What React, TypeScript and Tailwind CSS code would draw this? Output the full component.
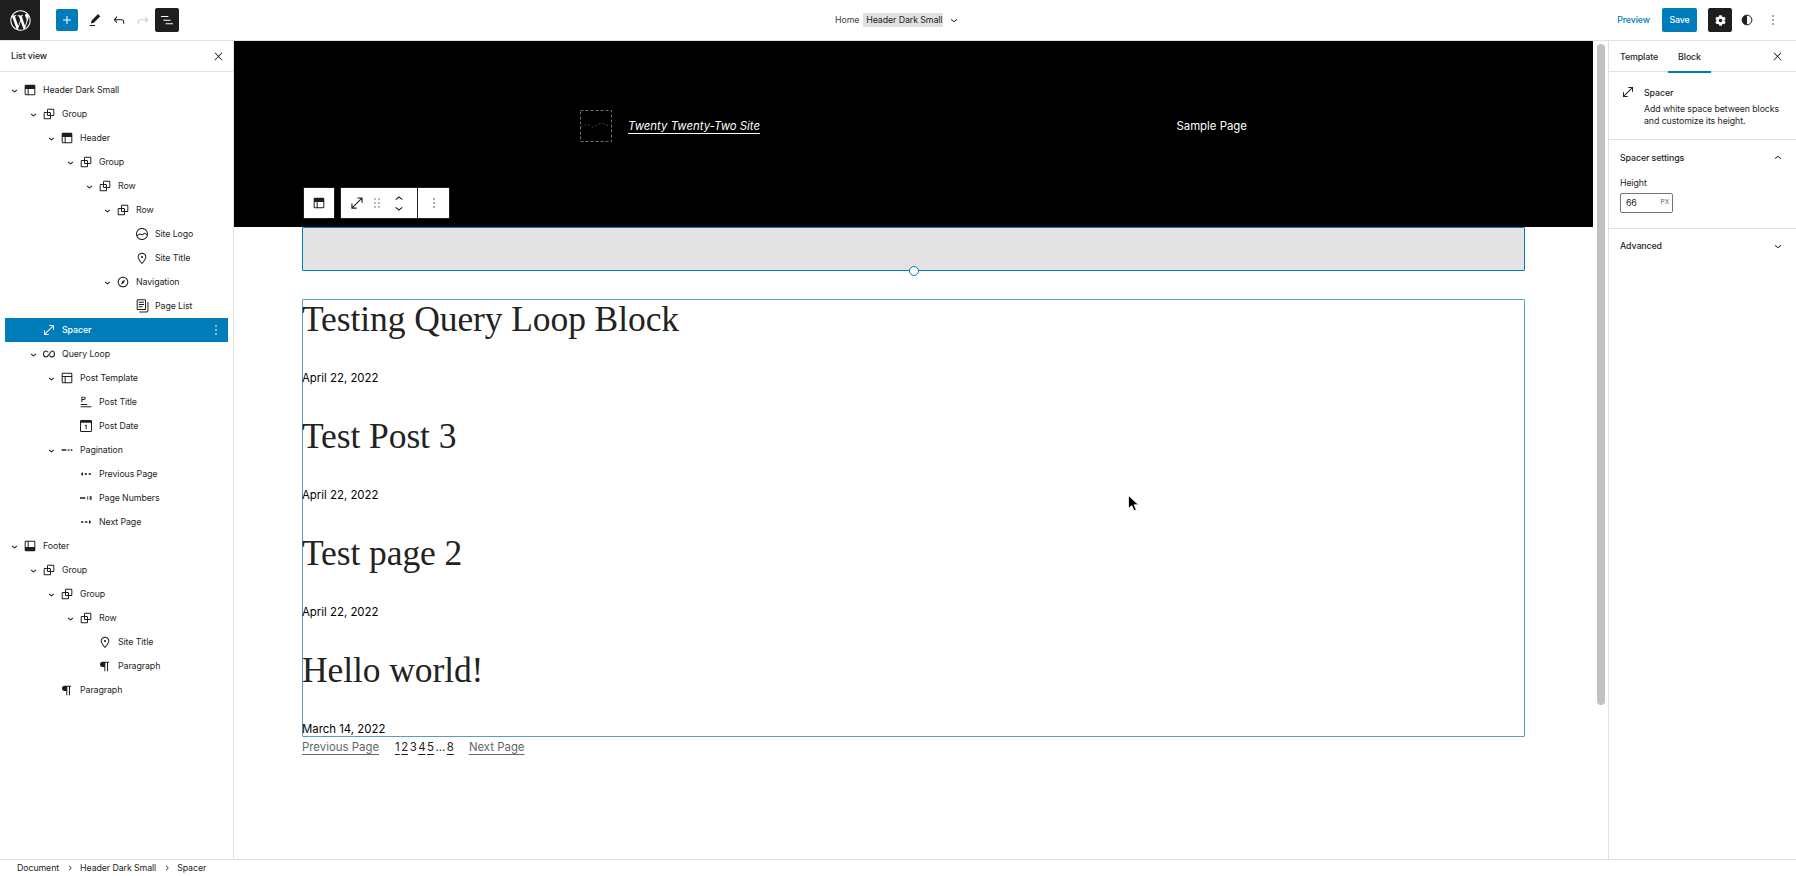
import { FaWordpressSimple, FaCog } from "react-icons/fa";

const P = {
  group:
    "M18 4h-7c-1.1 0-2 .9-2 2v3H6c-1.1 0-2 .9-2 2v7c0 1.1.9 2 2 2h7c1.1 0 2-.9 2-2v-3h3c1.1 0 2-.9 2-2V6c0-1.1-.9-2-2-2zm-4.500 14c0 .3-.2.5-.5.5H6c-.3 0-.5-.2-.5-.5v-7c0-.3.2-.5.5-.5h3V13c0 1.100.9 2 2 2h2.500v3zm0-4.500H11c-.3 0-.5-.2-.5-.5v-2.500H13c.3 0 .5.2.5.5v2.500zm5-.5c0 .3-.2.5-.5.5h-3V11c0-1.100-.9-2-2-2h-2.500V6c0-.3.2-.5.5-.5h7c.3 0 .5.2.5.5v7z",
  header:
    "M18.500 10.500H10v8h8a.5.5 0 00.5-.5v-7.500zm-10 0h-3V18a.5.5 0 00.5.5h2.500v-8zM6 4h12a2 2 0 012 2v12a2 2 0 01-2 2H6a2 2 0 01-2-2V6a2 2 0 012-2z",
  footer:
    "M18 5.500h-8v8h8.500V6a.5.5 0 00-.5-.5zm-9.500 8h-3V6a.5.5 0 01.5-.5h2.500v8zM6 4h12a2 2 0 012 2v12a2 2 0 01-2 2H6a2 2 0 01-2-2V6a2 2 0 012-2z",
  layout:
    "M18 5.500H6a.5.5 0 00-.5.5v3h13V6a.5.5 0 00-.5-.5zm.5 5H10v8h8a.5.5 0 00.5-.5v-7.500zm-10 0h-3V18a.5.5 0 00.5.5h2.500v-8zM6 4h12a2 2 0 012 2v12a2 2 0 01-2 2H6a2 2 0 01-2-2V6a2 2 0 012-2z",
  logo:
    "M12 3c-5 0-9 4-9 9s4 9 9 9 9-4 9-9-4-9-9-9zm0 1.500c4.100 0 7.500 3.400 7.500 7.500v.1c-1.400-.8-3.300-1.700-3.400-1.800-.2-.1-.5-.1-.8.100l-2.900 2.100L9 11.300c-.2-.1-.4 0-.6.100l-3.700 2.200c-.1-.5-.2-1-.2-1.500 0-4.200 3.400-7.600 7.500-7.600zm0 15c-3.100 0-5.700-1.900-6.900-4.500l3.700-2.200 3.500 1.200c.2.100.5 0 .7-.1l2.900-2.100c.8.400 2.500 1.200 3.500 1.900-.9 3.300-3.900 5.800-7.400 5.800z",
  marker:
    "M12 9c-.8 0-1.500.7-1.500 1.500S11.200 12 12 12s1.500-.7 1.500-1.500S12.800 9 12 9zm0-5c-3.600 0-6.500 2.800-6.500 6.200 0 .8.300 1.800.9 3.100.5 1.100 1.200 2.300 2 3.600.7 1 3 3.800 3.200 3.900l.4.500.4-.5c.2-.2 2.600-2.900 3.200-3.900.8-1.200 1.500-2.500 2-3.600.6-1.300.9-2.300.9-3.100C18.500 6.800 15.600 4 12 4zm4.300 8.700c-.5 1-1.100 2.200-1.900 3.400-.5.7-1.700 2.200-2.400 3-.7-.8-1.900-2.300-2.400-3-.8-1.200-1.400-2.300-1.900-3.300-.6-1.400-.7-2.200-.7-2.500 0-2.600 2.200-4.700 5-4.700s5 2.100 5 4.700c0 .2-.1 1-.7 2.400z",
  nav: "M12 4c-4.400 0-8 3.600-8 8s3.600 8 8 8 8-3.600 8-8-3.600-8-8-8zm0 14.500c-3.600 0-6.500-2.900-6.500-6.500S8.400 5.500 12 5.500s6.500 2.900 6.500 6.500-2.900 6.500-6.500 6.500zM9 16l4.500-3L15 8.400l-4.500 3L9 16z",
  pages:
    "M7 13.800h6v-1.500H7v1.500zM18 16V4c0-1.100-.9-2-2-2H6c-1.100 0-2 .9-2 2v12c0 1.100.9 2 2 2h10c1.100 0 2-.9 2-2zM5.500 16V4c0-.3.2-.5.5-.5h10c.3 0 .5.2.5.5v12c0 .3-.2.5-.5.5H6c-.3 0-.5-.2-.5-.5zM7 10.500h8V9H7v1.500zm0-3.500h8V5.500H7V7zM20.200 6v13c0 .7-.6 1.200-1.200 1.200H8v1.500h11c1.500 0 2.700-1.200 2.700-2.800V6h-1.500z",
  resize: "M7 18h4.500v1.500h-7v-7H6V17L17 6h-4.500V4.500h7v7H18V7L7 18Z",
  para: "M18 5.500H8.500a4 4 0 000 8H11V20h1.500V7h2.500v13h1.500V7H18V5.500z",
  undo: "M18.300 11.700c-.6-.6-1.400-.9-2.300-.9H6.700l2.900-3.300-1.100-1-4.500 5L8.500 16.500l1.100-1-2.900-3.300H16c.5 0 .9.2 1.300.5 1 1 1 3.400 1 4.500v.3h1.500v-.2c0-1.500 0-4.300-1.500-5.700z",
  redo: "M15.600 6.500l-1.100 1 2.900 3.300H8c-.9 0-1.700.3-2.300.9-1.400 1.500-1.400 4.200-1.400 5.600v.2h1.500v-.3c0-1.100 0-3.500 1-4.500.3-.3.7-.5 1.300-.5h9.200L14.500 15l1.100 1.100 4.600-4.600-4.600-5z",
  listView: "M3 6h11v1.500H3V6zm3.500 5.500h11V13h-11v-1.500zM21 17H10v1.500h11V17z",
  pencil: "m19 7-3-3-8.500 8.500-1 4 4-1L19 7Zm-7 11.500H5V20h7v-1.500Z",
  plus: "M18 11.200h-5.200V6h-1.600v5.200H6v1.600h5.200V18h1.600v-5.200H18z",
  close:
    "M13 11.800l6.100-6.300-1-1-6.100 6.200-6.100-6.200-1 1 6.100 6.300-6.500 6.700 1 1 6.500-6.600 6.500 6.600 1-1z",
  down: "M17.500 11.600L12 16l-5.500-4.400.9-1.200L12 14l4.500-3.600 1 1.200z",
  up: "M6.500 12.400L12 8l5.500 4.400-.9 1.200L12 10l-4.500 3.600-1-1.200z",
  caret: "M6 9.500L12 14l6-4.500 1.500 2L12 17.500 4.500 11.500z",
  crumb: "M10.600 6L9.400 7l4.600 5-4.600 5 1.200 1 5.400-6z",
  more: "M13 19h-2v-2h2v2zm0-6h-2v-2h2v2zm0-6h-2V5h2v2z",
  drag: "M8 7h2V5H8v2zm0 6h2v-2H8v2zm0 6h2v-2H8v2zm6-14v2h2V5h-2zm0 8h2v-2h-2v2zm0 6h2v-2h-2v2z",
  date: "M19 3H5a2 2 0 00-2 2v14a2 2 0 002 2h14a2 2 0 002-2V5a2 2 0 00-2-2zm.5 16a.5.5 0 01-.5.5H5a.5.5 0 01-.5-.5V7h15v12zM11.500 10h1.500v7h-1.500v-5.500H10V11z",
  title: "M4 20h16v-1.500H4V20zm0-3.500h10V15H4v1.500zM5 4v8h1.500V9h2.200c1.600 0 2.800-1 2.800-2.500S10.300 4 8.700 4H5zm1.500 1.400h2.100c.8 0 1.400.4 1.400 1.100s-.6 1.100-1.400 1.100H6.500V5.400z",
  pagination: "M4 10.800h7v2.400H4zM13 10.800h2.500v2.400H13zM17.500 10.800H20v2.400h-2.500z",
  prev: "M4 12l3.500-3v6zM10 10.800h3.500v2.400H10zM16 10.800h3.500v2.400H16z",
  numbers: "M3 10.800h8v2.400H3zM14 9.500h1.200v5H14zM17.500 9.500h3v1.200h-1.800v.7h1.800v3.100h-3v-1.200h1.800v-.7h-1.800z",
  next: "M4.500 10.800H8v2.400H4.500zM10.500 10.800H14v2.400h-3.500zM20 12l-3.500 3V9z",
};

const evenOdd = [P.header, P.footer, P.layout, P.date, P.title];

function Icon({ d, className = "w-4 h-4", color = "fill-[#1e1e1e]" }: { d: string; className?: string; color?: string }) {
  return (
    <svg viewBox="0 0 24 24" className={`${className} ${color} shrink-0`}>
      <path d={d} fillRule={evenOdd.includes(d) ? "evenodd" : "nonzero"} />
    </svg>
  );
}

function LoopIcon() {
  return (
    <svg viewBox="0 0 24 24" className="w-4 h-4 shrink-0 fill-none stroke-[#1e1e1e] stroke-[1.6]">
      <path d="M11 9.500C10 8.300 8.800 7.500 7.500 7.500 5.300 7.500 3.800 9.500 3.800 12s1.500 4.500 3.700 4.500c1.900 0 3.200-1.600 4.500-3.500 1.300-1.900 2.600-5.500 4.500-5.500 2.200 0 3.700 2 3.700 4.500s-1.500 4.500-3.700 4.500c-1.300 0-2.500-.8-3.500-2" />
    </svg>
  );
}

type Node = { label: string; level: number; icon: string; open?: boolean; selected?: boolean };

const levels: Record<number, string> = {
  1: "pl-[1px]",
  2: "pl-[20px]",
  3: "pl-[38px]",
  4: "pl-[57px]",
  5: "pl-[76px]",
  6: "pl-[94px]",
  7: "pl-[113px]",
};

const tree: Node[] = [
  { label: "Header Dark Small", level: 1, icon: P.header, open: true },
  { label: "Group", level: 2, icon: P.group, open: true },
  { label: "Header", level: 3, icon: P.header, open: true },
  { label: "Group", level: 4, icon: P.group, open: true },
  { label: "Row", level: 5, icon: P.group, open: true },
  { label: "Row", level: 6, icon: P.group, open: true },
  { label: "Site Logo", level: 7, icon: P.logo },
  { label: "Site Title", level: 7, icon: P.marker },
  { label: "Navigation", level: 6, icon: P.nav, open: true },
  { label: "Page List", level: 7, icon: P.pages },
  { label: "Spacer", level: 2, icon: P.resize, selected: true },
  { label: "Query Loop", level: 2, icon: "loop", open: true },
  { label: "Post Template", level: 3, icon: P.layout, open: true },
  { label: "Post Title", level: 4, icon: P.title },
  { label: "Post Date", level: 4, icon: P.date },
  { label: "Pagination", level: 3, icon: P.pagination, open: true },
  { label: "Previous Page", level: 4, icon: P.prev },
  { label: "Page Numbers", level: 4, icon: P.numbers },
  { label: "Next Page", level: 4, icon: P.next },
  { label: "Footer", level: 1, icon: P.footer, open: true },
  { label: "Group", level: 2, icon: P.group, open: true },
  { label: "Group", level: 3, icon: P.group, open: true },
  { label: "Row", level: 4, icon: P.group, open: true },
  { label: "Site Title", level: 5, icon: P.marker },
  { label: "Paragraph", level: 5, icon: P.para },
  { label: "Paragraph", level: 3, icon: P.para },
];

function Row({ node }: { node: Node }) {
  const sel = node.selected;
  return (
    <div
      className={`ml-[5px] w-[223px] h-6 flex items-center ${levels[node.level]} ${
        sel ? "bg-[#007cba] text-white font-medium" : "text-[#1e1e1e]"
      }`}
    >
      <div className="w-4 flex justify-center shrink-0">
        {node.open && <Icon d={P.caret} className="w-[9px] h-[9px]" />}
      </div>
      {node.icon === "loop" ? (
        <LoopIcon />
      ) : (
        <Icon d={node.icon} color={sel ? "fill-white" : "fill-[#1e1e1e]"} />
      )}
      <span className="ml-[5px]">{node.label}</span>
      {sel && (
        <div className="ml-auto mr-[4px]">
          <Icon d={P.more} color="fill-white" className="w-[16px] h-[16px]" />
        </div>
      )}
    </div>
  );
}

function PostHeading({ title, date, first }: { title: string; date: string; first?: boolean }) {
  return (
    <>
      <div className={`h-[40px] flex items-center text-[35.500px] text-[#222] ${first ? "mt-0" : "mt-[28px]"}`}>
        <span className="font-['Liberation_Serif',serif] leading-none">{title}</span>
      </div>
      <div className="mt-[29px] h-[20px] flex items-center text-[11.400px] tracking-normal text-black">{date}</div>
    </>
  );
}

export default function App() {
  return (
    <div className="w-full h-screen flex flex-col overflow-hidden bg-white font-['Inter',sans-serif] text-[8.800px] tracking-[-0.01em] text-[#1e1e1e]">
      {/* top bar */}
      <div className="h-[41px] shrink-0 border-b border-[#e0e0e0] flex items-center relative">
        <div className="w-10 h-10 bg-[#1e1e1e] flex items-center justify-center shrink-0">
          <FaWordpressSimple className="text-white text-[21px]" />
        </div>
        <div className="w-[22px] h-[22px] ml-[16px] bg-[#007cba] rounded-[2px] flex items-center justify-center">
          <Icon d={P.plus} color="fill-white" className="w-[16px] h-[16px]" />
        </div>
        <div className="ml-[8px] w-[18px]"><Icon d={P.pencil} className="w-[18px] h-[18px]" /></div>
        <div className="ml-[7px] w-[16px]"><Icon d={P.undo} /></div>
        <div className="ml-[8px] w-[16px]"><Icon d={P.redo} color="fill-[#cccccc]" /></div>
        <div className="ml-[4px] w-6 h-6 rounded-[2px] bg-[#1e1e1e] flex items-center justify-center">
          <Icon d={P.listView} color="fill-white" />
        </div>

        <div className="ml-[656px] flex items-center text-[#1e1e1e]">
          <span className="text-[#3c3c3c]">Home</span>
          <span className="ml-[4px] px-[3px] h-[14px] w-[80px] flex items-center whitespace-nowrap bg-[#e0e0e0] rounded-[1px]">Header Dark Small</span>
          <Icon d={P.down} className="ml-[4px] w-[14px] h-[14px]" />
        </div>

        <div className="ml-auto flex items-center">
          <span className="text-[#007cba] font-medium">Preview</span>
          <div className="ml-[12px] w-[35px] h-[24px] rounded-[2px] bg-[#007cba] text-white font-medium flex items-center justify-center">Save</div>
          <div className="ml-[11px] w-6 h-6 rounded-[2px] bg-[#1e1e1e] flex items-center justify-center">
            <FaCog className="text-white text-[11px]" />
          </div>
          <svg viewBox="0 0 24 24" className="ml-[7px] w-[16px] h-[16px] shrink-0">
            <circle cx="12" cy="12" r="7.300" fill="none" stroke="#1e1e1e" strokeWidth="1.500" />
            <path d="M12 4.700a7.300 7.300 0 000 14.600z" fill="#1e1e1e" />
          </svg>
          <div className="ml-[10px] mr-[15px]"><Icon d={P.more} color="fill-[#555]" /></div>
        </div>
      </div>

      <div className="flex-1 min-h-0 flex">
        {/* list view */}
        <div className="w-[234px] shrink-0 border-r border-[#e0e0e0] flex flex-col">
          <div className="h-[31px] border-b border-[#e0e0e0] flex items-center justify-between pl-[11px] pr-[8px] font-medium shrink-0">
            <span>List view</span>
            <Icon d={P.close} className="w-[13px] h-[13px]" />
          </div>
          <div className="pt-[6px]">
            {tree.map((n, i) => (
              <Row key={i} node={n} />
            ))}
          </div>
        </div>

        {/* canvas */}
        <div className="relative w-[1359px] shrink-0 flex flex-col">
          <div className="h-[186px] bg-black shrink-0 flex items-start justify-between px-[346px] pt-[69px] text-white tracking-normal">
            <div className="flex items-center">
              <svg viewBox="0 0 32 32" className="w-8 h-8 shrink-0" fill="none" stroke="#8a8a8a" strokeWidth="0.800">
                <rect x="0.500" y="0.500" width="31" height="31" strokeDasharray="3 2" />
                <path d="M1 17l6-3 6 3 8-4 8 3" strokeDasharray="2 2" stroke="#555" />
              </svg>
              <span className="ml-[16px] mt-[1px] text-[11.400px] italic underline underline-offset-[3px]">Twenty Twenty-Two Site</span>
            </div>
            <span className="text-[11.400px] leading-[32px]">Sample Page</span>
          </div>

          <div className="px-[68px] flex flex-col">
            <div className="h-[44px] bg-[#e3e3e3] border border-[#007cba] rounded-[1px] shrink-0"></div>
            <div className="mt-[28px] h-[438px] border border-[#5b9dbd] rounded-[1px] shrink-0">
              <div className="-ml-[1px]">
                <PostHeading first title="Testing Query Loop Block" date="April 22, 2022" />
                <PostHeading title="Test Post 3" date="April 22, 2022" />
                <PostHeading title="Test page 2" date="April 22, 2022" />
                <PostHeading title="Hello world!" date="March 14, 2022" />
              </div>
            </div>
            <div className="flex items-center h-[20px] pt-[2px] text-[11.400px] tracking-normal text-[#666]">
              <span className="underline underline-offset-[3px]">Previous Page</span>
              <span className="ml-[16px] text-[#222] flex gap-[1.500px]">
                <span className="underline underline-offset-[3px]">1</span>
                <span className="underline underline-offset-[3px]">2</span>
                <span>3</span>
                <span className="underline underline-offset-[3px]">4</span>
                <span className="underline underline-offset-[3px]">5</span>
                <span>...</span>
                <span className="underline underline-offset-[3px]">8</span>
              </span>
              <span className="ml-[15px] underline underline-offset-[3px]">Next Page</span>
            </div>
          </div>

          {/* block toolbar */}
          <div className="absolute left-[69px] top-[146px] flex items-stretch h-[32px] text-[#1e1e1e]">
            <div className="w-[32px] h-[32px] bg-white border border-[#1e1e1e] flex items-center justify-center">
              <Icon d={P.header} />
            </div>
            <div className="ml-[5px] flex bg-white border border-[#1e1e1e] items-center">
              <div className="w-[76px] flex items-center pl-[7px]">
                <Icon d={P.resize} className="w-[18px] h-[18px]" />
                <Icon d={P.drag} className="ml-[3px] w-[16px] h-[16px]" color="fill-[#777]" />
                <div className="ml-[6px] flex flex-col -space-y-[7px]">
                  <Icon d={P.up} className="w-4 h-4" />
                  <Icon d={P.down} className="w-4 h-4" />
                </div>
              </div>
              <div className="w-[32px] h-full border-l border-[#1e1e1e] flex items-center justify-center">
                <Icon d={P.more} color="fill-[#555]" />
              </div>
            </div>
          </div>
          {/* resize handle */}
          <div className="absolute left-[675px] top-[225px] w-[10px] h-[10px] rounded-full bg-white border border-[#007cba]"></div>
          {/* mouse pointer */}
          <svg viewBox="0 0 12 17" className="absolute left-[894px] top-[454px] w-[12px] h-[17px]">
            <path d="M0.500 0.500V13.500L3.800 10.600 6 15.800 8.300 14.800 6.100 9.800H10.500z" fill="#000" stroke="#fff" strokeWidth="0.800" />
          </svg>
        </div>

        {/* scrollbar */}
        <div className="w-[15px] shrink-0 pt-[3px] pl-[4px]">
          <div className="w-[8px] h-[661px] rounded-[4px] bg-[#c1c1c1]"></div>
        </div>

        {/* settings */}
        <div className="flex-1 min-w-0 border-l border-[#e0e0e0] flex flex-col">
          <div className="h-[31px] border-b border-[#e0e0e0] flex items-stretch font-medium shrink-0 relative">
            <div className="ml-[11px] pt-[1px] flex items-center">Template</div>
            <div className="ml-[10px] px-[10px] pt-[1px] flex items-center border-b-2 border-[#007cba] h-[32px] w-[43px]">Block</div>
            <div className="ml-auto mr-[12px] flex items-center">
              <Icon d={P.close} className="w-[13px] h-[13px]" />
            </div>
          </div>
          <div className="h-[68px] border-b border-[#e0e0e0] pl-[11px] pt-[14px] flex shrink-0">
            <Icon d={P.resize} className="-mt-[2px] w-[16px] h-[16px]" />
            <div className="ml-[8px]">
              <div className="font-medium leading-[14px]">Spacer</div>
              <div className="mt-[3px] leading-[12px] w-[145px]">Add white space between blocks and customize its height.</div>
            </div>
          </div>
          <div className="h-[89px] border-b border-[#e0e0e0] px-[11px] shrink-0">
            <div className="h-[36px] flex items-center justify-between font-medium">
              <span>Spacer settings</span>
              <Icon d={P.up} className="w-[14px] h-[14px]" />
            </div>
            <div className="leading-[14px]">Height</div>
            <div className="mt-[3px] w-[53px] h-[20px] border border-[#757575] rounded-[2px] flex items-center justify-between pl-[5px] pr-[3px]">
              <span>66</span>
              <span className="text-[6.500px] text-[#666]">PX</span>
            </div>
          </div>
          <div className="h-[34px] px-[11px] flex items-center justify-between font-medium">
            <span>Advanced</span>
            <Icon d={P.down} className="w-[14px] h-[14px]" />
          </div>
        </div>
      </div>

      {/* breadcrumb */}
      <div className="h-[17px] shrink-0 border-t border-[#e0e0e0] flex items-center pl-[17px]">
        <span>Document</span>
        <Icon d={P.crumb} className="mx-[5.500px] w-[10px] h-[10px]" />
        <span>Header Dark Small</span>
        <Icon d={P.crumb} className="mx-[5.500px] w-[10px] h-[10px]" />
        <span>Spacer</span>
      </div>
    </div>
  );
}
